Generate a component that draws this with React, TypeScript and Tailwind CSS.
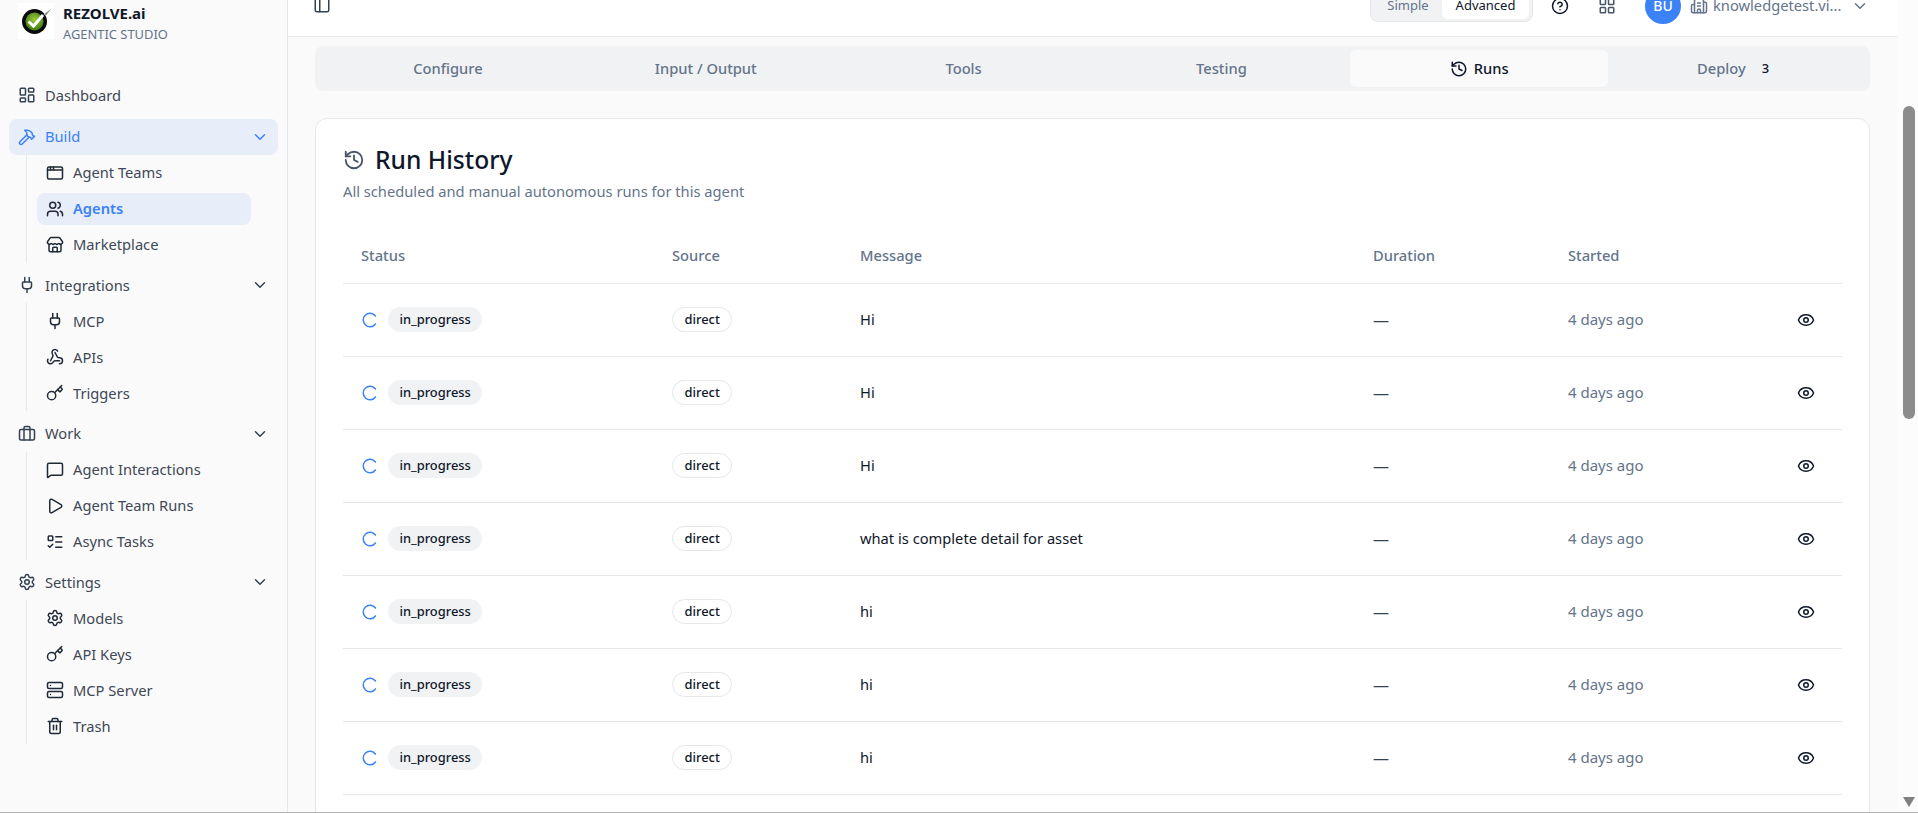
import {
  AppWindow,
  Briefcase,
  Building2,
  ChevronDown,
  CircleHelp,
  Eye,
  Hammer,
  History,
  Key,
  LayoutDashboard,
  LayoutGrid,
  ListTodo,
  LoaderCircle,
  MessageSquare,
  PanelLeft,
  Play,
  Plug,
  Server,
  Settings,
  Store,
  Trash2,
  Users,
  Webhook,
} from "lucide-react";
import type { LucideIcon } from "lucide-react";

interface NavItem {
  label: string;
  icon: LucideIcon;
  active?: boolean;
}

interface NavGroup {
  label: string;
  icon: LucideIcon;
  active?: boolean;
  items: NavItem[];
}

const groups: NavGroup[] = [
  {
    label: "Build",
    icon: Hammer,
    active: true,
    items: [
      { label: "Agent Teams", icon: AppWindow },
      { label: "Agents", icon: Users, active: true },
      { label: "Marketplace", icon: Store },
    ],
  },
  {
    label: "Integrations",
    icon: Plug,
    items: [
      { label: "MCP", icon: Plug },
      { label: "APIs", icon: Webhook },
      { label: "Triggers", icon: Key },
    ],
  },
  {
    label: "Work",
    icon: Briefcase,
    items: [
      { label: "Agent Interactions", icon: MessageSquare },
      { label: "Agent Team Runs", icon: Play },
      { label: "Async Tasks", icon: ListTodo },
    ],
  },
  {
    label: "Settings",
    icon: Settings,
    items: [
      { label: "Models", icon: Settings },
      { label: "API Keys", icon: Key },
      { label: "MCP Server", icon: Server },
      { label: "Trash", icon: Trash2 },
    ],
  },
];

const tabs = ["Configure", "Input / Output", "Tools", "Testing", "Runs", "Deploy"];

const runs = ["Hi", "Hi", "Hi", "what is complete detail for asset", "hi", "hi", "hi"];

function Logo() {
  return (
    <div className="flex h-9 w-9 shrink-0 items-center justify-center bg-white">
      <svg width="36" height="36" viewBox="0 0 36 36">
        <defs>
          <radialGradient id="logo-green" cx="50%" cy="40%" r="60%">
            <stop offset="0%" stopColor="#9ccb3b" />
            <stop offset="100%" stopColor="#3f7d12" />
          </radialGradient>
        </defs>
        <circle cx="16.5" cy="18.5" r="12.5" fill="#0a0a0a" />
        <circle cx="16.5" cy="18.5" r="9" fill="url(#logo-green)" />
        <path d="M10.5 18.5 L15.5 23 L25 12" fill="none" stroke="#ffffff" strokeWidth="3" />
        <path d="M25 12 L33.5 5.5 L28 12.5 Z" fill="#8a8a8a" />
      </svg>
    </div>
  );
}

function Sidebar() {
  return (
    <aside className="flex h-full w-[288px] shrink-0 flex-col border-r border-[#e5e7eb] bg-[#fafafa] px-[9px]">
      <div className="flex gap-[9px] pl-[9px] pt-[3px]">
        <Logo />
        <div className="flex flex-col">
          <span className="text-[15px] font-bold leading-[20px] text-[#0f172a]">REZOLVE.ai</span>
          <span className="mt-[1px] text-[12.9px] leading-[20px] text-[#64748b]">AGENTIC STUDIO</span>
        </div>
      </div>
      <nav className="mt-[34px] flex flex-col gap-[4.5px] text-[14.7px] text-[#3f4856]">
        <div className="flex h-9 items-center gap-[9px] px-[9px] pb-[2px]">
          <LayoutDashboard className="h-[18px] w-[18px] text-[#334155]" />
          Dashboard
        </div>
        {groups.map((group) => (
          <div key={group.label} className="flex flex-col">
            <div
              className={
                group.active
                  ? "flex h-9 items-center gap-[9px] rounded-lg bg-[#e7edf9] px-[9px] text-[#3b82f6]"
                  : "flex h-9 items-center gap-[9px] rounded-lg px-[9px]"
              }
            >
              <group.icon className={group.active ? "h-[18px] w-[18px]" : "h-[18px] w-[18px] text-[#334155]"} />
              <span className="flex-1">{group.label}</span>
              <ChevronDown className={group.active ? "h-[18px] w-[18px]" : "h-[18px] w-[18px] text-[#334155]"} />
            </div>
            <div className="ml-[17px] mr-[27px] flex flex-col gap-1 border-l border-[#e5e7eb] pb-[2px] pl-[10px] pt-[2px]">
              {group.items.map((item) => (
                <div
                  key={item.label}
                  className={
                    item.active
                      ? "flex h-8 items-center gap-[9px] rounded-lg bg-[#e7edf9] px-[9px] font-semibold text-[#3b82f6]"
                      : "flex h-8 items-center gap-[9px] rounded-lg px-[9px]"
                  }
                >
                  <item.icon className="h-[18px] w-[18px] text-[#1f2937]" />
                  {item.label}
                </div>
              ))}
            </div>
          </div>
        ))}
      </nav>
    </aside>
  );
}

function Header() {
  return (
    <header className="h-[37px] shrink-0 border-b border-[#e5e7eb] bg-white">
      <div className="flex h-[11px] items-center pl-[25px] pr-[28px]">
        <PanelLeft className="-mt-[2px] h-[18px] w-[18px] text-[#334155]" />
        <div className="ml-auto mt-[1px] flex h-8 w-[163px] items-center rounded-lg border border-[#e5e7eb] bg-[#f1f2f4] px-[3px] text-[13px]">
          <span className="w-[68px] text-center text-[#64748b]">Simple</span>
          <span className="flex h-[26px] flex-1 items-center justify-center rounded-md bg-white text-[#0f172a]">
            Advanced
          </span>
        </div>
        <CircleHelp className="ml-[18px] h-[18px] w-[18px] text-[#0f172a]" />
        <LayoutGrid className="ml-[29px] h-[18px] w-[18px] text-[#475569]" />
        <div className="ml-[29px] flex h-9 w-9 shrink-0 items-center justify-center rounded-full bg-[#3b82f6] text-[14px] font-medium text-white">
          BU
        </div>
        <Building2 className="ml-[9px] h-[18px] w-[18px] text-[#64748b]" />
        <span className="ml-[5px] w-[134px] whitespace-nowrap text-[14.7px] text-[#64748b]">knowledgetest.vi...</span>
        <ChevronDown className="ml-[4px] h-[18px] w-[18px] text-[#64748b]" />
      </div>
    </header>
  );
}

function Tabs() {
  return (
    <div className="grid h-[45px] grid-cols-6 rounded-lg bg-[#f1f2f4] p-1 text-[14.7px] font-medium text-[#64748b]">
      {tabs.map((tab) => (
        <div
          key={tab}
          className={
            tab === "Runs"
              ? "flex items-center justify-center gap-1.5 rounded-md bg-[#fafafa] text-[#0f172a]"
              : "flex items-center justify-center gap-1.5"
          }
        >
          {tab === "Runs" && <History className="h-[18px] w-[18px]" />}
          {tab}
          {tab === "Deploy" && <span className="ml-[10px] mr-[8px] text-[13px] text-[#0f172a]">3</span>}
        </div>
      ))}
    </div>
  );
}

function RunTable() {
  return (
    <table className="mt-[34px] w-full table-fixed border-collapse text-[14.7px]">
      <thead>
        <tr className="border-b border-[#e5e7eb] text-left text-[#64748b]">
          <th className="h-[48px] w-[311px] pb-2 pl-[18px] font-medium">Status</th>
          <th className="w-[188px] pb-2 pl-[18px] font-medium">Source</th>
          <th className="w-[513px] pb-2 pl-[18px] font-medium">Message</th>
          <th className="w-[195px] pb-2 pl-[18px] font-medium">Duration</th>
          <th className="w-[200px] pb-2 pl-[18px] font-medium">Started</th>
          <th className="pb-2" />
        </tr>
      </thead>
      <tbody>
        {runs.map((message, i) => (
          <tr key={i} className="h-[73px] border-b border-[#e5e7eb]">
            <td className="pl-[18px]">
              <div className="flex items-center gap-[9px]">
                <LoaderCircle className="h-[18px] w-[18px] rotate-[36deg] text-[#3b82f6]" />
                <span className="flex h-[25px] items-center rounded-full bg-[#f1f2f4] px-[11.5px] text-[12.9px] font-medium text-[#0f172a]">
                  in_progress
                </span>
              </div>
            </td>
            <td className="pl-[18px]">
              <span className="inline-flex h-[25px] items-center rounded-full border border-[#e5e7eb] px-[11.5px] text-[12.9px] font-medium text-[#0f172a]">
                direct
              </span>
            </td>
            <td className="pl-[18px] text-[#0f172a]">{message}</td>
            <td className="pl-[18px] text-[16px] text-[#334155]">—</td>
            <td className="pl-[18px] text-[15px] text-[#64748b]">4 days ago</td>
            <td className="pr-[27px]">
              <Eye className="ml-auto h-[18px] w-[18px] text-[#0f172a]" />
            </td>
          </tr>
        ))}
      </tbody>
    </table>
  );
}

function Scrollbar() {
  return (
    <div className="flex h-full w-[21px] shrink-0 flex-col items-center bg-[#fcfcfc] pt-[106px]">
      <div className="ml-[3px] h-[313px] w-3 rounded-full bg-[#8c8c8c]" />
      <svg className="ml-[3px] mt-auto mb-[5px]" width="12" height="10" viewBox="0 0 12 10">
        <path d="M0 0 H12 L6 10 Z" fill="#808080" />
      </svg>
    </div>
  );
}

export default function App() {
  return (
    <div
      className="flex h-[813px] w-[1918px] overflow-hidden border-b border-[#b4b4b4] bg-[#fafafa]"
      style={{ fontFamily: '"Noto Sans", sans-serif' }}
    >
      <Sidebar />
      <main className="flex h-full min-w-0 flex-1 flex-col overflow-hidden">
        <Header />
        <div className="flex flex-col gap-[27px] px-[27px] pt-[9px]">
          <Tabs />
          <section className="rounded-t-xl border border-[#e5e7eb] bg-white px-[27px] pb-10 pt-[25px]">
            <div className="flex items-center gap-[10px]">
              <History className="h-[22px] w-[22px] text-[#475569]" />
              <h2 className="text-[24.6px] font-medium leading-[32px] text-[#0f172a]">Run History</h2>
            </div>
            <p className="mt-[5px] text-[14.7px] leading-[20px] text-[#64748b]">
              All scheduled and manual autonomous runs for this agent
            </p>
            <RunTable />
          </section>
        </div>
      </main>
      <Scrollbar />
    </div>
  );
}
